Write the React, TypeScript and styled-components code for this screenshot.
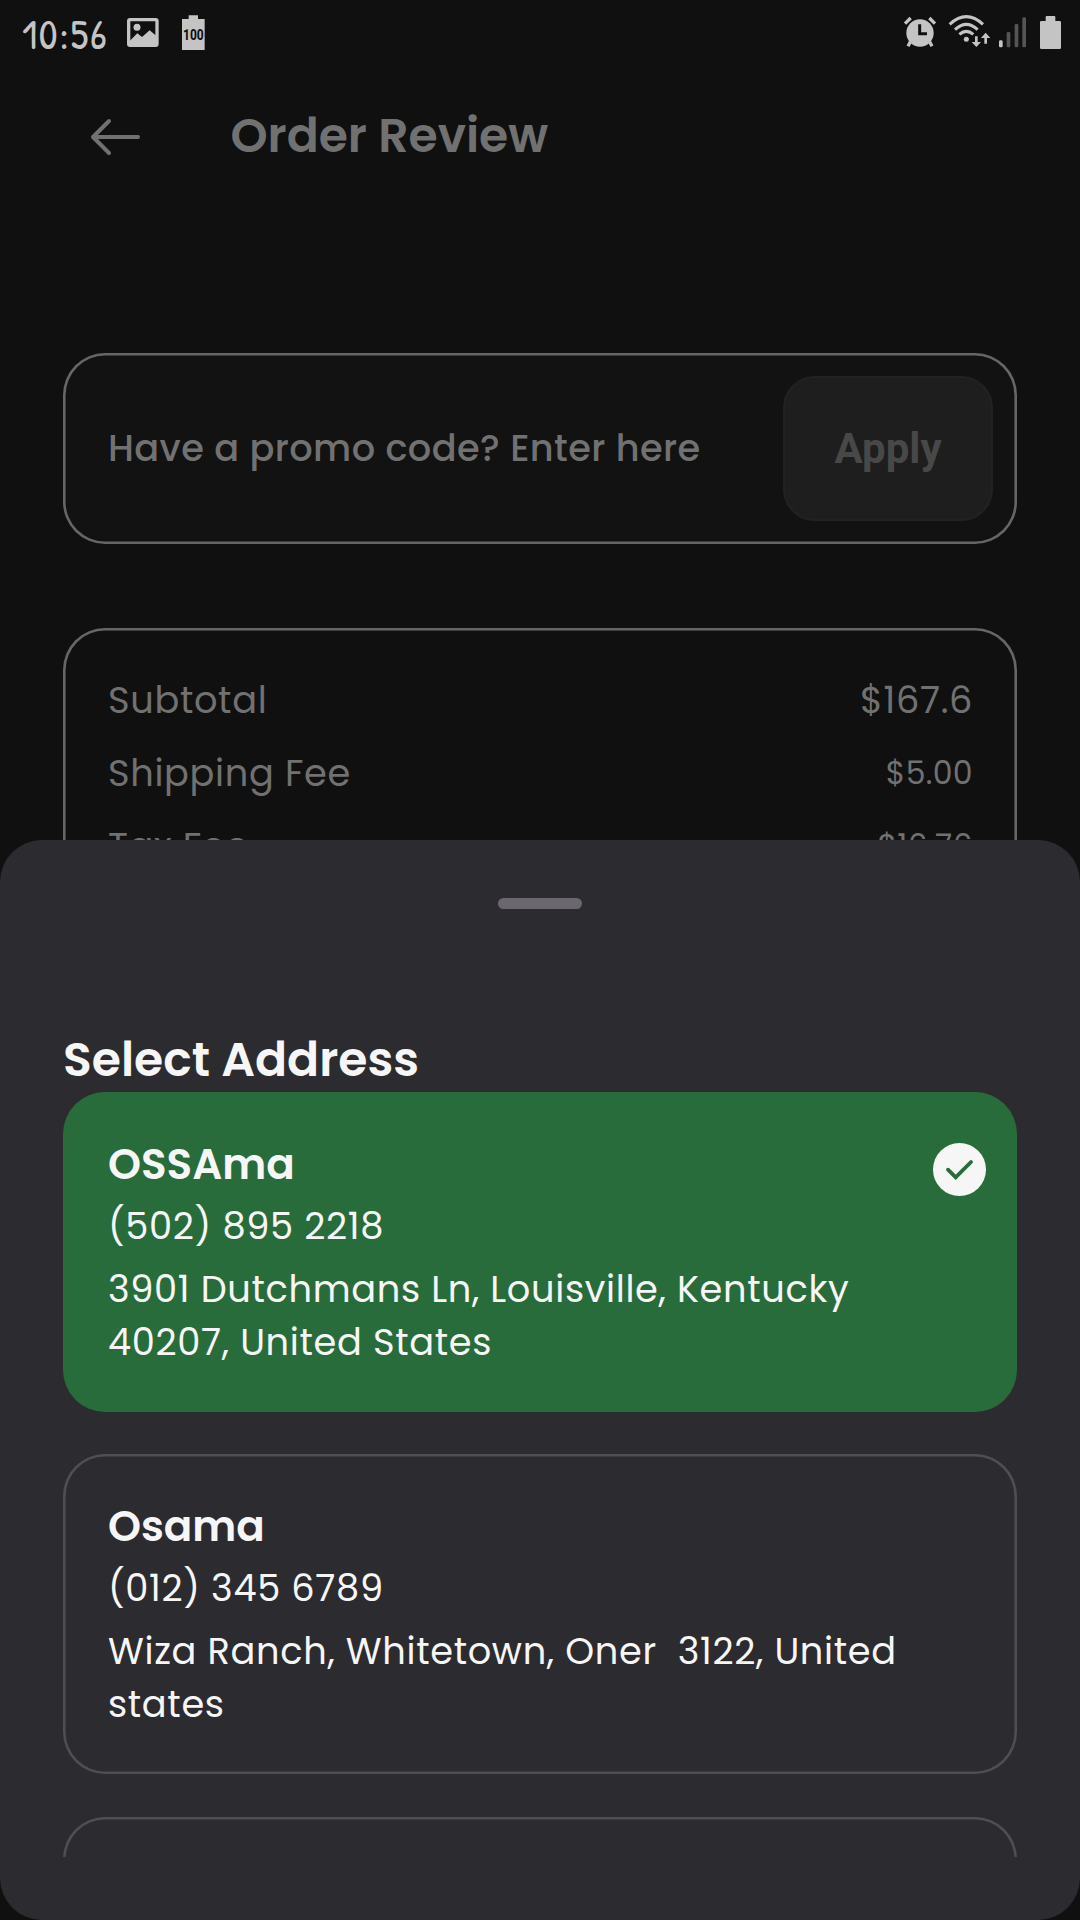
import React from 'react';
import styled, { createGlobalStyle } from 'styled-components';

const Global = createGlobalStyle`
  body { margin: 0; background: #101010; }
  * { box-sizing: border-box; }
`;

const Screen = styled.div`
  position: relative;
  width: 1080px;
  height: 1920px;
  overflow: hidden;
  background: #101010;
  color: #717171;
  font-family: Poppins, Inter, sans-serif;
`;

const StatusBar = styled.header`
  display: flex;
  justify-content: space-between;
  height: 66px;
  padding: 0 18px 0 22px;
  color: #c4c4c4;
`;

const StatusGroup = styled.div`
  display: flex;
`;

const Clock = styled.time`
  width: 104px;
  font: 400 42px/67px "Patrick Hand", Lato, sans-serif;
  letter-spacing: 1.6px;
`;

const Glyph = styled.svg<{ $before?: number }>`
  display: block;
  flex: none;
  height: 66px;
  margin-left: ${(p) => p.$before ?? 0}px;
`;

const BadgeText = styled.text`
  font: 800 43px Roboto, sans-serif;
  fill: #101010;
`;

const TitleBar = styled.div`
  display: flex;
  align-items: center;
  height: 66px;
  margin-top: 36px;
  padding-left: 88px;
`;

const BackArrow = styled.svg`
  display: block;
  width: 56px;
  height: 44px;
  margin-top: 4px;
`;

const Title = styled.h1`
  margin: 2px 0 0 86.5px;
  font-size: 47.25px;
  font-weight: 600;
  line-height: 66px;
`;

const Content = styled.main`
  display: flex;
  flex-direction: column;
  gap: 84px;
  padding: 185px 63px 0;
`;

const Outlined = styled.section`
  border-radius: 42px;
  box-shadow: inset 0 0 0 2.6px #666;
`;

const PromoBox = styled(Outlined)`
  display: flex;
  align-items: center;
  justify-content: space-between;
  height: 191px;
  padding: 0 24px 0 45px;
  background: #121212;
`;

const PromoHint = styled.span`
  padding-bottom: 2px;
  font-size: 36.75px;
  font-weight: 500;
  letter-spacing: 0.39px;
`;

const ApplyButton = styled.button`
  width: 210px;
  height: 145px;
  border: 2px solid #222;
  border-radius: 32px;
  background: #1e1e1e;
  color: #484848;
  font: 700 42px Roboto, sans-serif;
`;

const Summary = styled(Outlined)`
  display: flex;
  flex-direction: column;
  gap: 20.7px;
  height: 420px;
  padding: 46px 44px 0 45px;
`;

const SummaryRow = styled.div`
  display: flex;
  align-items: center;
  justify-content: space-between;
  height: 52.5px;
  font-size: 36.75px;
  line-height: 52.5px;
  letter-spacing: 0.656px;
`;

const Amount = styled.span<{ $small?: boolean }>`
  font-size: ${(p) => (p.$small ? 31.5 : 36.75)}px;
  letter-spacing: ${(p) => (p.$small ? 0.35 : 0.656)}px;
`;

const Sheet = styled.aside`
  position: absolute;
  inset: 840px 0 0;
  display: flex;
  flex-direction: column;
  padding: 58px 63px 63px;
  border-radius: 42px;
  background: #2c2b30;
  color: #f6f6f6;
`;

const Handle = styled.div`
  align-self: center;
  width: 84px;
  height: 11px;
  flex: none;
  border-radius: 6px;
  background: #6a686e;
`;

const SheetTitle = styled.h2`
  height: 65px;
  margin: 118px 0 0;
  font-size: 47.25px;
  font-weight: 600;
  line-height: 66px;
`;

const AddressList = styled.div`
  display: flex;
  flex: 1;
  flex-direction: column;
  gap: 42.4px;
  min-height: 0;
  overflow: hidden;
`;

const AddressCard = styled.article<{ $selected?: boolean }>`
  display: flex;
  flex: none;
  align-items: flex-start;
  justify-content: space-between;
  height: 320px;
  padding: 43px 31px 0 45px;
  border-radius: 42px;
  background: ${(p) => (p.$selected ? '#286c3c' : 'transparent')};
  box-shadow: ${(p) => (p.$selected ? 'none' : 'inset 0 0 0 2.6px #4f4f4f')};
`;

const AddressText = styled.div`
  width: 820px;
  font-size: 36.75px;
  line-height: 53px;
  letter-spacing: 0.656px;
`;

const Name = styled.h3`
  margin: 0 0 6px;
  font-size: 42px;
  font-weight: 600;
  line-height: 59px;
  letter-spacing: 0;
`;

const Phone = styled.p`
  margin: 0 0 10px;
`;

const Street = styled.p`
  margin: 0;
  white-space: pre-wrap;
`;

const CheckBadge = styled.svg`
  display: block;
  width: 53px;
  height: 53px;
  margin-top: 8px;
`;

interface Address {
  name: string;
  phone: string;
  street: string;
  selected?: boolean;
}

const addresses: Address[] = [
  {
    name: 'OSSAma',
    phone: '(502) 895 2218',
    street: '3901 Dutchmans Ln, Louisville, Kentucky\n40207, United States',
    selected: true,
  },
  {
    name: 'Osama',
    phone: '(012) 345 6789',
    street: 'Wiza Ranch, Whitetown, Oner  3122, United\nstates',
  },
];

const fees = [
  { label: 'Subtotal', amount: '$167.6' },
  { label: 'Shipping Fee', amount: '$5.00', small: true },
  { label: 'Tax Fee', amount: '$16.76', small: true },
];

export default function App() {
  return (
    <Screen>
      <Global />
      <StatusBar>
        <StatusGroup>
          <Clock>10:56</Clock>
          <Glyph width={34} viewBox="378 0 102 198">
            <rect x="386" y="59" width="85" height="77" rx="4" fill="none" stroke="currentColor" strokeWidth="10" />
            <circle cx="411" cy="82" r="10.5" fill="currentColor" />
            <path d="M386 126 L412 100 L426 111 L449 91 L472 110 V136 H386 Z" fill="currentColor" />
          </Glyph>
          <Glyph width={25} $before={21} viewBox="543 0 75 198">
            <path d="M546 57 H566 V46 H594 V57 H614 V150 H546 Z" fill="currentColor" />
            <BadgeText x="580" y="119" textAnchor="middle" textLength="62" lengthAdjust="spacingAndGlyphs">100</BadgeText>
          </Glyph>
        </StatusGroup>
        <StatusGroup>
          <Glyph width={34} viewBox="69 0 102 198">
            <circle cx="120" cy="99" r="41" fill="currentColor" />
            <path d="M75 71 L92 54 M148 54 L165 71 M92 124 L84 139 M148 124 L156 139" stroke="currentColor" strokeWidth="10" />
            <path d="M119 73 V101 H141" fill="none" stroke="#101010" strokeWidth="9" />
          </Glyph>
          <Glyph width={43} $before={11} viewBox="204 0 129 198">
            <g fill="none" stroke="currentColor" strokeWidth="9">
              <path d="M209 73 Q259 27 309 73" />
              <path d="M225 89 Q259 57 293 89" />
              <path d="M238 103 Q259 85 280 103" />
            </g>
            <circle cx="259" cy="118" r="7.5" fill="currentColor" />
            <path d="M285 109 H293 V126 H303 L289 141 L275 126 H285 Z M313 131 H321 V114 H331 L317 98 L303 114 H313 Z" fill="currentColor" />
          </Glyph>
          <Glyph width={29} $before={7} viewBox="354 0 87 198">
            <rect x="357" y="121" width="11" height="21" rx="4" fill="currentColor" />
            <rect x="380" y="96" width="11" height="46" rx="4" fill="#555" />
            <rect x="404" y="72" width="11" height="70" rx="4" fill="#555" />
            <rect x="427" y="52" width="11" height="90" rx="4" fill="#555" />
          </Glyph>
          <Glyph width={23} $before={12} viewBox="477 0 69 198">
            <path d="M484 63 H497 V51 Q497 48 500 48 H523 Q526 48 526 51 V63 H539 Q543 63 543 67 V143 Q543 147 539 147 H484 Q480 147 480 143 V67 Q480 63 484 63 Z" fill="currentColor" />
          </Glyph>
        </StatusGroup>
      </StatusBar>

      <TitleBar>
        <BackArrow viewBox="88 115 56 44" fill="none" stroke="currentColor" strokeWidth="4" strokeLinecap="round" strokeLinejoin="round">
          <path d="M138 137 H93 M109 121 L93 137 L109 153" />
        </BackArrow>
        <Title>Order Review</Title>
      </TitleBar>

      <Content>
        <PromoBox>
          <PromoHint>Have a promo code? Enter here</PromoHint>
          <ApplyButton>Apply</ApplyButton>
        </PromoBox>
        <Summary>
          {fees.map((fee) => (
            <SummaryRow key={fee.label}>
              <span>{fee.label}</span>
              <Amount $small={fee.small}>{fee.amount}</Amount>
            </SummaryRow>
          ))}
        </Summary>
      </Content>

      <Sheet>
        <Handle />
        <SheetTitle>Select Address</SheetTitle>
        <AddressList>
          {addresses.map((a) => (
            <AddressCard key={a.name} $selected={a.selected}>
              <AddressText>
                <Name>{a.name}</Name>
                <Phone>{a.phone}</Phone>
                <Street>{a.street}</Street>
              </AddressText>
              {a.selected && (
                <CheckBadge viewBox="0 0 53 53">
                  <circle cx="26.5" cy="26.5" r="26.5" fill="#f6f6f6" />
                  <path d="M15 26.7 L22.7 34.3 L38 19" fill="none" stroke="#286c3c" strokeWidth="3.8" strokeLinecap="round" />
                </CheckBadge>
              )}
            </AddressCard>
          ))}
          <AddressCard />
        </AddressList>
      </Sheet>
    </Screen>
  );
}
